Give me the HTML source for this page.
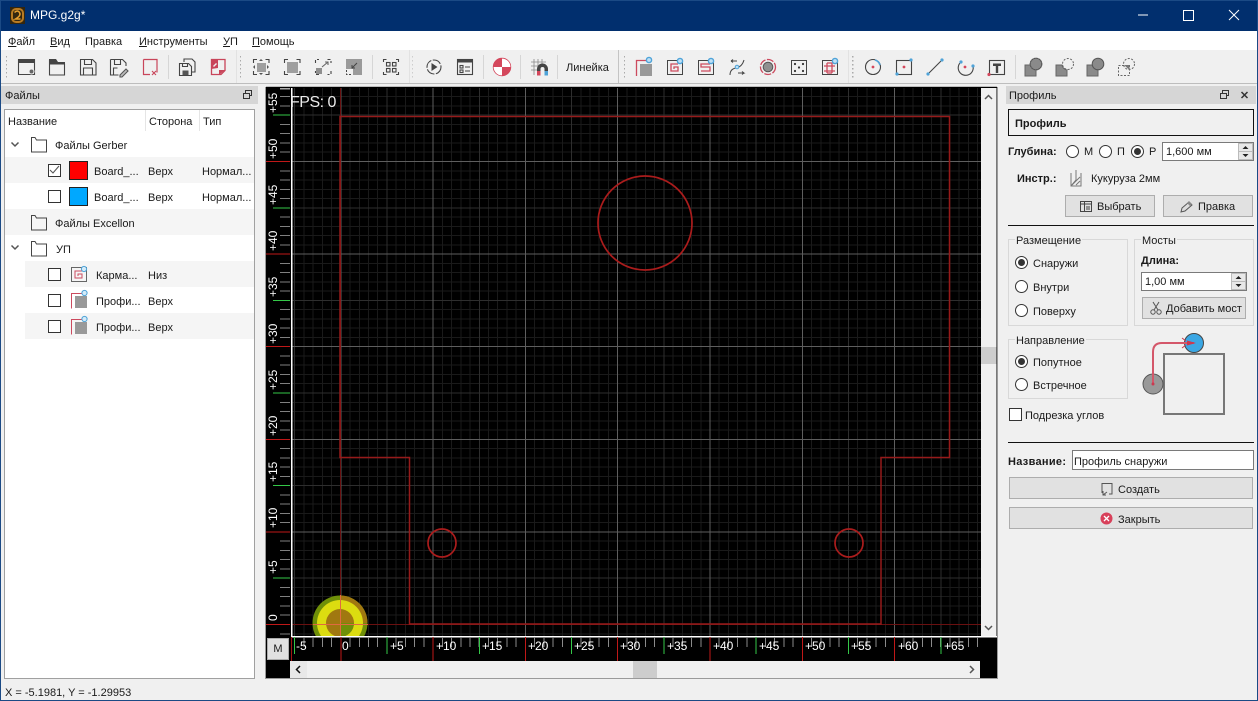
<!DOCTYPE html>
<html><head><meta charset="utf-8"><title>MPG.g2g*</title>
<style>
html,body{margin:0;padding:0;width:1258px;height:701px;overflow:hidden;background:#f0f0f0;font-family:"Liberation Sans","DejaVu Sans",sans-serif;font-size:11px;color:#1a1a1a}
.a{position:absolute}
.t{position:absolute;white-space:nowrap;line-height:16px;height:16px;margin-top:1px}
.b{font-weight:bold}
u{text-decoration:underline}
.btn{position:absolute;background:#e1e1e1;border:1px solid #adadad;box-sizing:border-box}
.inp{position:absolute;background:#fff;border:1px solid #7a7a7a;box-sizing:border-box}
.gb{position:absolute;border:1px solid #d8d8d8;box-sizing:border-box}
.gt{position:absolute;background:#f0f0f0;padding:0 1px;white-space:nowrap;line-height:14px;margin-top:1px}
.hd{position:absolute;background:#d6d6d6;height:18px;top:86px}
.row{position:absolute;height:26px;background:#f5f5f5}
.cb{position:absolute;width:13px;height:13px;background:#fff;border:1px solid #333;box-sizing:border-box}
.rd{position:absolute;width:13px;height:13px;background:#fff;border:1px solid #333;border-radius:50%;box-sizing:border-box}
.rd.on:after{content:"";position:absolute;left:2px;top:2px;width:7px;height:7px;border-radius:50%;background:#333}
svg{position:absolute;left:0;top:0;overflow:hidden}
</style></head><body>

<!-- title bar -->
<div class="a" style="left:0;top:0;width:1258px;height:31px;background:#012f6e"></div>
<div class="a" style="left:0;top:0;width:1258px;height:1px;background:#1b4a85"></div>
<div class="a" style="left:0;top:0;width:1px;height:701px;background:#1b4a85"></div>
<div class="a" style="left:1257px;top:0;width:1px;height:701px;background:#1b4a85"></div>
<div class="a" style="left:0;top:700px;width:1258px;height:1px;background:#1b4a85"></div>
<div class="t" style="left:30px;top:6px;color:#fff;font-size:12px">MPG.g2g*</div>
<svg width="1258" height="31">
 <rect x="10" y="7" width="15" height="17" fill="#33260f"/>
 <rect x="12" y="9" width="11" height="13" rx="4" fill="none" stroke="#b87a22" stroke-width="2"/>
 <path d="M14.500 12.500q3-3 5 0t-4 6.500h5" fill="none" stroke="#e8a030" stroke-width="1.500"/>
 <path d="M1138 15h10" stroke="#fff"/>
 <rect x="1183.500" y="10.500" width="10" height="10" fill="none" stroke="#fff"/>
 <path d="M1229 10l10 10M1239 10l-10 10" stroke="#fff" fill="none"/>
</svg>

<!-- menu -->
<div class="a" style="left:1px;top:31px;width:1256px;height:19px;background:#fff"></div>
<div class="t" style="left:8px;top:33px"><u>Ф</u>айл</div>
<div class="t" style="left:50px;top:33px"><u>В</u>ид</div>
<div class="t" style="left:85px;top:33px">Правка</div>
<div class="t" style="left:139px;top:33px"><u>И</u>нструменты</div>
<div class="t" style="left:223px;top:33px"><u>У</u>П</div>
<div class="t" style="left:252px;top:33px"><u>П</u>омощь</div>

<!-- toolbar -->
<div class="a" style="left:1px;top:50px;width:1256px;height:33px;background:#f0f0f0"></div>
<div class="a" style="left:1px;top:83px;width:1256px;height:1px;background:#bdbdbd"></div>
<div class="t" style="left:566px;top:59px">Линейка</div>
<svg width="1258" height="86" style="top:0">
 <defs>
  <pattern id="grip" width="3" height="4" patternUnits="userSpaceOnUse"><rect width="1.500" height="1.500" fill="#aaa"/></pattern>
  <g id="blueDot"><circle r="2.600" fill="#bfe0f5" stroke="#4fa3d8" stroke-width="1.400"/></g>
 </defs>
 <rect x="5" y="55" width="2" height="24" fill="url(#grip)"/>
 <rect x="236" y="50" width="1" height="33" fill="#e2e2e2"/><rect x="239" y="55" width="2" height="24" fill="url(#grip)"/>
 <rect x="409" y="50" width="1" height="33" fill="#e2e2e2"/><rect x="412" y="55" width="2" height="24" fill="url(#grip)"/>
 <rect x="618" y="50" width="1" height="33" fill="#c4c4c4"/><rect x="623" y="55" width="2" height="24" fill="url(#grip)"/>
 <rect x="848" y="50" width="1" height="33" fill="#e2e2e2"/><rect x="852" y="55" width="2" height="24" fill="url(#grip)"/>
 <g fill="#d6d6d6">
  <rect x="168" y="55" width="1" height="24"/><rect x="372" y="55" width="1" height="24"/><rect x="483" y="55" width="1" height="24"/><rect x="520" y="55" width="1" height="24"/><rect x="557" y="55" width="1" height="24"/><rect x="1015" y="55" width="1" height="24"/>
 </g>
 <g fill="none" stroke="#444" stroke-width="1.100">
  <path d="M18.500 59.500h16v15h-16z"/><rect x="18" y="59" width="17" height="4" fill="#444" stroke="none"/><rect x="29" y="69" width="5" height="5" rx="2.500" fill="#666" stroke="#f0f0f0"/>
  <path d="M49.500 60v15h15v-11h-15"/><path d="M49 59h7l2 3h7v2H49z" fill="#444" stroke="none"/>
  <path d="M80.500 59.500h12l3.500 3.500v12h-15.500z"/><path d="M84.500 59.500v5h7v-5M83.500 75v-7h9v7"/>
  <path d="M110.500 59.500h12l3.500 3.500v3M110.500 59.500v15.500h8M114.500 59.500v5h6v-5M113.500 75v-7h4"/>
  <path d="M120 75l6-6 2 2-6 6h-2z" fill="#bbb" stroke="#555"/>
  <path d="M143.500 59.500h13.500v13M150 74.500h-6.500v-15" stroke="#c8455a" stroke-width="1.200"/>
  <path d="M152 71l4 4M156 71l-4 4" stroke="#c8455a"/>
  <path d="M184 62v-3h8l3 3v10h-3"/><path d="M179.500 63.500h9l3 3v9h-12z" fill="#f0f0f0"/><path d="M182.500 63.500v3h5v-3"/>
  <rect x="182.500" y="70.500" width="6" height="4.500" fill="#555" stroke="none"/>
 </g>
 <path d="M211.500 59.500h13.500v11l-4 4h-9.500z" fill="none" stroke="#c8455a" stroke-width="1.300"/>
 <path d="M211 59h7v9l-7 1z" fill="#c8455a"/><path d="M213 66l3-3 1 1-3 3z" fill="#eee"/><path d="M219 75v-5h6z" fill="#c8455a"/>
 <g fill="none" stroke="#444" stroke-width="1.100">
  <path d="M253.500 63v-3.500h3.500M265.500 59.500h3.500v3.500M269 71v3.500h-3.500M257 74.500h-3.500V71"/>
  <path d="M284.500 63v-3.500h3.500M296.500 59.500h3.500v3.500M300 71v3.500h-3.500M288 74.500h-3.500V71"/>
  <path d="M315.500 63v-3.500h3.500M327.500 59.500h3.500v3.500M331 71v3.500h-3.500M319 74.500h-3.500V71" stroke-dasharray="3 2"/>
  <path d="M322 67l6-5M328 65v-3h-3" stroke="#666"/>
 </g>
 <rect x="257" y="63" width="9" height="9" fill="#9e9e9e"/>
 <path d="M253 67l2-2v4zM269 67l-2-2v4zM261 59l-2 2h4zM261 75l-2-2h4z" fill="#555"/>
 <rect x="287" y="62" width="11" height="11" fill="#9e9e9e"/>
 <rect x="316" y="68" width="6" height="6" fill="#8f8f8f"/>
 <path d="M346 59h16v16h-9v-6h-7z" fill="#9a9a9a"/><path d="M357 63l-5 5M352 65v3h3" stroke="#444" fill="none"/><path d="M346.500 70v4.500h4.500" stroke="#444" fill="none" stroke-dasharray="2 1.500"/>
 <g fill="none" stroke="#444" stroke-width="1.100">
  <path d="M383.500 62v-2.500h3M396 59.500h2.500V62M398.500 72v2.500H396M386.500 74.500h-3V72"/>
  <rect x="386.500" y="62.500" width="3.500" height="3.500"/><rect x="392.500" y="62.500" width="3.500" height="3.500"/><rect x="386.500" y="68.500" width="3.500" height="3.500"/><rect x="392.500" y="68.500" width="3.500" height="3.500"/>
  <circle cx="434" cy="67" r="7" stroke-dasharray="9 1.500"/>
  <rect x="457.500" y="59.500" width="15" height="15"/>
  <rect x="460" y="65.500" width="3" height="2.500"/><rect x="460" y="70" width="3" height="2.500"/><path d="M465 67h5M465 71h5"/>
 </g>
 <path d="M431.500 63l6 4-6 4z" fill="#444"/>
 <rect x="457" y="59" width="16" height="3.500" fill="#444"/>
 <circle cx="502" cy="67" r="9" fill="#d4475c"/>
 <path d="M502 58a9 9 0 0 1 9 9h-9zM502 67v9a9 9 0 0 1-9-9z" fill="#fff"/>
 <circle cx="502" cy="67" r="8.800" fill="none" stroke="#d4475c" stroke-width=".8"/>
 <path d="M531 62h15M531 66h15M531 70h8M534 59v16M538 59v16M542 59v5" stroke="#888" stroke-width=".8"/>
 <path d="M537 75v-6a5.500 5.500 0 0 1 11 0v6h-3.500v-6a2 2 0 0 0-4 0v6z" fill="#444"/>
 <rect x="537" y="71" width="3.500" height="4.500" fill="#d4475c"/><rect x="544.500" y="71" width="3.500" height="4.500" fill="#4fa3d8"/>
 <g fill="none" stroke="#cc4a5e" stroke-width="1.300">
  <path d="M636.500 76V60.500h12"/>
  <rect x="667.500" y="60.500" width="15" height="14" stroke="#444" stroke-width="1"/>
  <path d="M678 64h-7v7h7v-4h-4v2"/>
  <rect x="698.500" y="60.500" width="15" height="14" stroke="#444" stroke-width="1"/>
  <path d="M710 64h-9v3h9v4h-9"/>
  <circle cx="768" cy="67" r="7.500" stroke-dasharray="7 1.500"/>
  <rect x="822.500" y="60.500" width="15" height="14" stroke="#444" stroke-width="1"/>
  <path d="M827 63v10M832 63v10M824 66h11M824 71h11M827 63h5v3M827 73h5"/>
 </g>
 <rect x="640" y="64" width="12" height="12" fill="#999"/>
 <circle cx="768" cy="67" r="4.800" fill="#909090" stroke="#555"/>
 <use href="#blueDot" x="649" y="60"/><use href="#blueDot" x="680" y="61"/><use href="#blueDot" x="711" y="61"/><use href="#blueDot" x="835" y="61"/>
 <g fill="none" stroke="#444" stroke-width="1">
  <path d="M730 75q0-6 6-7t8-8"/><path d="M731 61h6M731 61l2-1.500M731 61l2 1.500M738 73h6l-2-1.500M744 73l-2 1.500"/>
  <rect x="791.500" y="60.500" width="15" height="14"/>
  <circle cx="737" cy="67" r="1.800" fill="#bfe0f5" stroke="#4fa3d8"/>
 </g>
 <g fill="#333"><circle cx="795" cy="64" r="1.100"/><circle cx="803" cy="64" r="1.100"/><circle cx="799" cy="67.500" r="1.100"/><circle cx="795" cy="71" r="1.100"/><circle cx="803" cy="71" r="1.100"/></g>
 <g fill="none" stroke="#444" stroke-width="1.100">
  <circle cx="873" cy="67" r="7.500"/>
  <rect x="896.500" y="60.500" width="15" height="14"/>
  <path d="M928 74l14-14"/>
  <path d="M961 62a7.500 7.500 0 1 0 12 4"/>
  <rect x="989.500" y="60.500" width="15" height="14"/>
 </g>
 <path d="M875 60a7.500 7.500 0 0 1 5 5" stroke="#4fa3d8" stroke-width="1.600" fill="none"/>
 <circle cx="873" cy="67" r="1.400" fill="#d4475c"/><circle cx="904" cy="67" r="1.400" fill="#d4475c"/><circle cx="965" cy="67" r="1.400" fill="#d4475c"/>
 <circle cx="911" cy="60" r="1.600" fill="#4fa3d8"/><circle cx="897" cy="74" r="1.600" fill="#4fa3d8"/><circle cx="928" cy="74" r="1.600" fill="#4fa3d8"/><circle cx="942" cy="60" r="1.600" fill="#4fa3d8"/><circle cx="961" cy="62" r="1.600" fill="#4fa3d8"/><circle cx="973" cy="66" r="1.600" fill="#4fa3d8"/><circle cx="989" cy="74.500" r="1.600" fill="#d4475c"/>
 <path d="M993 63.500h8v2.500h-2.800v7h-2.400v-7H993z" fill="#444"/>
 <rect x="1025" y="65" width="11" height="11" fill="#8a8a8a" stroke="#666"/><circle cx="1036" cy="64" r="5.800" fill="#8a8a8a" stroke="#666"/><circle cx="1036" cy="64" r="5.800" fill="none" stroke="#555" stroke-dasharray="1.500 1"/>
 <path d="M1056 65h6a6 6 0 0 0 5 5v6h-11z" fill="#8a8a8a" stroke="#666"/><circle cx="1068" cy="64" r="5.500" fill="none" stroke="#666" stroke-dasharray="2 1.500"/>
 <rect x="1087" y="65" width="11" height="11" fill="#8a8a8a" stroke="#666"/><circle cx="1098" cy="64" r="5.800" fill="#8a8a8a" stroke="#555"/>
 <rect x="1118.500" y="65.500" width="11" height="10" fill="none" stroke="#666" stroke-dasharray="2 1.500"/><circle cx="1129" cy="64" r="5.500" fill="none" stroke="#666" stroke-dasharray="2 1.500"/><path d="M1124 65h5.500v5z" fill="#777"/>
</svg>

<!-- left dock -->
<div class="hd" style="left:1px;width:257px"></div>
<div class="t" style="left:5px;top:87px">Файлы</div>
<svg width="1258" height="110" style="top:0">
 <path d="M243.500 93.500h6v5h-6zM245.500 93v-2.500h6v5h-2" fill="none" stroke="#333"/>
</svg>
<div class="a" style="left:4px;top:109px;width:251px;height:570px;background:#fff;border:1px solid #a0a0a0;box-sizing:border-box"></div>
<div class="a" style="left:145px;top:110px;width:1px;height:21px;background:#e5e5e5"></div>
<div class="a" style="left:199px;top:110px;width:1px;height:21px;background:#e5e5e5"></div>
<div class="t" style="left:8px;top:113px">Название</div>
<div class="t" style="left:149px;top:113px">Сторона</div>
<div class="t" style="left:203px;top:113px">Тип</div>

<div class="row" style="left:5px;top:157px;width:249px"></div>
<div class="row" style="left:5px;top:209px;width:249px"></div>
<div class="row" style="left:25px;top:261px;width:229px"></div>
<div class="row" style="left:25px;top:313px;width:229px"></div>

<div class="t" style="left:55px;top:137px">Файлы Gerber</div>
<div class="t" style="left:94px;top:163px">Board_...</div><div class="t" style="left:148px;top:163px">Верх</div><div class="t" style="left:202px;top:163px">Нормал...</div>
<div class="t" style="left:94px;top:189px">Board_...</div><div class="t" style="left:148px;top:189px">Верх</div><div class="t" style="left:202px;top:189px">Нормал...</div>
<div class="t" style="left:55px;top:215px">Файлы Excellon</div>
<div class="t" style="left:56px;top:241px">УП</div>
<div class="t" style="left:96px;top:267px">Карма...</div><div class="t" style="left:148px;top:267px">Низ</div>
<div class="t" style="left:96px;top:293px">Профи...</div><div class="t" style="left:148px;top:293px">Верх</div>
<div class="t" style="left:96px;top:319px">Профи...</div><div class="t" style="left:148px;top:319px">Верх</div>

<div class="cb" style="left:48px;top:164px"></div>
<div class="cb" style="left:48px;top:190px"></div>
<div class="cb" style="left:48px;top:268px"></div>
<div class="cb" style="left:48px;top:294px"></div>
<div class="cb" style="left:48px;top:320px"></div>
<div class="a" style="left:69px;top:161px;width:19px;height:19px;background:#f00;border:1px solid #222;box-sizing:border-box"></div>
<div class="a" style="left:69px;top:187px;width:19px;height:19px;background:#00a8ff;border:1px solid #222;box-sizing:border-box"></div>
<svg width="262" height="345" style="top:0">
 <path d="M50 170l3 3 6-7" fill="none" stroke="#555" stroke-width="1.100"/>
 <path d="M11.500 142.500l3.500 3.500 3.500-3.500M11.500 245.500l3.500 3.500 3.500-3.500" fill="none" stroke="#555" stroke-width="1.500"/>
 <g fill="none" stroke="#444">
  <path d="M31.500 137.500v14.500h15v-12h-10l-1.500-2.500z"/>
  <path d="M31.500 215.500v14.500h15v-12h-10l-1.500-2.500z"/>
  <path d="M31.500 241.500v14.500h15v-12h-10l-1.500-2.500z"/>
 </g>
 <rect x="71.500" y="267.500" width="15" height="14" fill="none" stroke="#666"/>
 <path d="M82 271h-7v7h7v-4h-4v2" fill="none" stroke="#cc4a5e"/>
 <circle cx="84" cy="269" r="2.600" fill="#d5ebf8" stroke="#4fa3d8"/>
 <path d="M71.500 308.500v-15h10M71.500 334.500v-15h10" fill="none" stroke="#cc4a5e"/>
 <rect x="75" y="296" width="12" height="12" fill="#999"/><rect x="75" y="322" width="12" height="12" fill="#999"/>
 <circle cx="84.500" cy="293" r="2.600" fill="#d5ebf8" stroke="#4fa3d8"/><circle cx="84.500" cy="319" r="2.600" fill="#d5ebf8" stroke="#4fa3d8"/>
</svg>

<!-- status -->
<div class="t" style="left:5px;top:684px">X = -5.1981, Y = -1.29953</div>

<!-- canvas -->
<svg width="1258" height="701" style="left:0;top:0">
 <defs>
  <clipPath id="cv"><rect x="292" y="88" width="689" height="548"/></clipPath>
 </defs>
 <rect x="266" y="87" width="731" height="592" fill="#000"/>
 <rect x="266" y="86" width="731" height="1" fill="#bdbdbd"/>
 <g clip-path="url(#cv)" shape-rendering="crispEdges" fill="none">
  <path d="M294.150 362H981" stroke="#1a1a1a" stroke-width="548" stroke-dasharray="1 8.230"/>
  <path d="M636 634.260V88" stroke="#1a1a1a" stroke-width="690" stroke-dasharray="1 8.260"/>
  <path d="M294.150 362H981" stroke="#2e2e2e" stroke-width="548" stroke-dasharray="1 45.150"/>
  <path d="M636 625V88" stroke="#2e2e2e" stroke-width="690" stroke-dasharray="1 45.300"/>
  <path d="M340.300 362H981" stroke="#5e5e5e" stroke-width="548" stroke-dasharray="1 91.300"/>
  <path d="M636 625V88" stroke="#5e5e5e" stroke-width="690" stroke-dasharray="1 91.600"/>
 </g>
 <path d="M340.500 88V636M292 624.500H981" stroke="#6a1010" stroke-width="1"/>
 <g clip-path="url(#cv)">
  <circle cx="340" cy="623" r="27.500" fill="#6f8f08"/>
  <path d="M340 623V595.500A27.500 27.500 0 0 1 367.500 623z" fill="#a07810"/>
  <circle cx="340" cy="623" r="23" fill="#dcdc10"/>
  <circle cx="340" cy="623" r="14" fill="#a07810"/>
  <path d="M340 623h14a14 14 0 0 1-14 14z" fill="#6f8f08"/>
  <path d="M340.500 595V636M313 624.500H368" stroke="#e06a40" stroke-width="1"/>
 </g>
 <g fill="none" stroke="#961a1a" stroke-width="1.500">
  <path d="M340 116.500H949.500V457.500H881V624H409.500V457.500H340z"/>
  <g stroke="#aa1c1c" stroke-width="1.700">
   <circle cx="645" cy="223" r="47"/>
   <circle cx="442" cy="543" r="14"/>
   <circle cx="849" cy="543" r="14"/>
  </g>
 </g>
 <!-- left ruler -->
 <g fill="none" shape-rendering="crispEdges">
  <path d="M285 634.260V88" stroke="#808080" stroke-width="10" stroke-dasharray="1 8.260"/>
  <path d="M281.500 578.700V88" stroke="#34c848" stroke-width="17" stroke-dasharray="1 91.600"/>
  <path d="M278 625V88" stroke="#c01818" stroke-width="24" stroke-dasharray="1 91.600"/>
 </g>
 <rect x="291" y="88" width="1.500" height="549" fill="#fff"/>
 <rect x="280" y="88" width="10" height="1.500" fill="#aaa"/>
 <!-- bottom ruler -->
 <rect x="291" y="636" width="706" height="1.500" fill="#fff"/>
 <g fill="none" shape-rendering="crispEdges">
  <path d="M294.150 642H981" stroke="#8a8a8a" stroke-width="10" stroke-dasharray="1 8.230"/>
  <path d="M294.150 645.500H981" stroke="#34c848" stroke-width="17" stroke-dasharray="1 91.300"/>
  <path d="M340.300 649H981" stroke="#c01818" stroke-width="24" stroke-dasharray="1 91.300"/>
 </g>
 <rect x="291" y="637" width="1" height="24" fill="#a01414"/>
 <g fill="#fff" font-family="'Liberation Sans',sans-serif" font-size="12">
  <text transform="translate(277 113) rotate(-90)">+55</text>
  <text transform="translate(277 159) rotate(-90)">+50</text>
  <text transform="translate(277 205) rotate(-90)">+45</text>
  <text transform="translate(277 251) rotate(-90)">+40</text>
  <text transform="translate(277 297) rotate(-90)">+35</text>
  <text transform="translate(277 344) rotate(-90)">+30</text>
  <text transform="translate(277 390) rotate(-90)">+25</text>
  <text transform="translate(277 436) rotate(-90)">+20</text>
  <text transform="translate(277 482) rotate(-90)">+15</text>
  <text transform="translate(277 528) rotate(-90)">+10</text>
  <text transform="translate(277 574) rotate(-90)">+5</text>
  <text transform="translate(277 621) rotate(-90)">0</text>
  <text x="296" y="650">-5</text><text x="342" y="650">0</text><text x="390" y="650">+5</text><text x="436" y="650">+10</text><text x="482" y="650">+15</text><text x="528" y="650">+20</text><text x="574" y="650">+25</text><text x="620" y="650">+30</text><text x="667" y="650">+35</text><text x="713" y="650">+40</text><text x="759" y="650">+45</text><text x="805" y="650">+50</text><text x="851" y="650">+55</text><text x="898" y="650">+60</text><text x="944" y="650">+65</text>
 </g>
 <text x="290" y="107" font-family="'Liberation Sans',sans-serif" font-size="16" letter-spacing="-.5" fill="#ececec">FPS: 0</text>
 <!-- v scrollbar -->
 <rect x="981" y="88" width="15.500" height="548" fill="#f0f0f0"/>
 <rect x="981" y="347" width="15.500" height="17" fill="#cdcdcd"/>
 <path d="M985 99l3.500-3.500 3.500 3.500M985 626l3.500 3.500 3.500-3.500" fill="none" stroke="#555" stroke-width="1.500"/>
 <!-- h scrollbar -->
 <rect x="290" y="661" width="690" height="17" fill="#f0f0f0"/>
 <rect x="290" y="661" width="17" height="17" fill="#e8e8e8"/>
 <rect x="633" y="661" width="24" height="17" fill="#cdcdcd"/>
 <path d="M300 666l-3.500 3.500 3.500 3.500" fill="none" stroke="#111" stroke-width="1.500"/>
 <path d="M970 666l3.500 3.500-3.500 3.500" fill="none" stroke="#555" stroke-width="1.500"/>
 <rect x="266" y="678" width="731" height="1" fill="#9a9a9a"/>
 <rect x="997" y="87" width="1" height="592" fill="#9a9a9a"/>
 <rect x="265" y="87" width="1" height="592" fill="#9a9a9a"/>
</svg>
<div class="a" style="left:267px;top:638px;width:22px;height:22px;background:#e1e1e1;border:1px solid #adadad;box-sizing:border-box;text-align:center;line-height:20px">M</div>

<!-- right dock -->
<div class="hd" style="left:1006px;width:250px"></div>
<div class="t" style="left:1009px;top:87px">Профиль</div>
<svg width="1258" height="110" style="top:0">
 <path d="M1220.500 93.500h6v5h-6zM1222.500 93v-2.500h6v5h-2" fill="none" stroke="#333"/>
 <path d="M1241.500 92l6 6M1247.500 92l-6 6" stroke="#333" stroke-width="1.500" fill="none"/>
</svg>
<div class="a" style="left:1008px;top:109px;width:246px;height:27px;border:1px solid #111;box-sizing:border-box"></div>
<div class="t b" style="left:1015px;top:115px">Профиль</div>
<div class="t b" style="left:1008px;top:143px">Глубина:</div>
<div class="rd" style="left:1066px;top:145px"></div><div class="t" style="left:1084px;top:143px">М</div>
<div class="rd" style="left:1099px;top:145px"></div><div class="t" style="left:1117px;top:143px">П</div>
<div class="rd on" style="left:1131px;top:145px"></div><div class="t" style="left:1149px;top:143px">Р</div>
<div class="inp" style="left:1162px;top:142px;width:92px;height:19px"></div>
<div class="t" style="left:1166px;top:143px">1,600 мм</div>
<div class="t b" style="left:1017px;top:170px">Инстр.:</div>
<div class="t" style="left:1091px;top:170px">Кукуруза 2мм</div>
<div class="btn" style="left:1065px;top:195px;width:90px;height:22px"></div>
<div class="t" style="left:1097px;top:198px">Выбрать</div>
<div class="btn" style="left:1163px;top:195px;width:90px;height:22px"></div>
<div class="t" style="left:1198px;top:198px">Правка</div>
<div class="a" style="left:1008px;top:225px;width:246px;height:1px;background:#111"></div>

<div class="gb" style="left:1008px;top:239px;width:120px;height:87px"></div>
<div class="gt" style="left:1015px;top:233px">Размещение</div>
<div class="gb" style="left:1134px;top:239px;width:120px;height:87px"></div>
<div class="gt" style="left:1141px;top:233px">Мосты</div>
<div class="rd on" style="left:1015px;top:256px"></div><div class="t" style="left:1033px;top:255px">Снаружи</div>
<div class="rd" style="left:1015px;top:280px"></div><div class="t" style="left:1033px;top:279px">Внутри</div>
<div class="rd" style="left:1015px;top:304px"></div><div class="t" style="left:1033px;top:303px">Поверху</div>
<div class="t b" style="left:1141px;top:252px">Длина:</div>
<div class="inp" style="left:1141px;top:272px;width:106px;height:19px"></div>
<div class="t" style="left:1145px;top:273px">1,00 мм</div>
<div class="btn" style="left:1142px;top:297px;width:104px;height:22px"></div>
<div class="t" style="left:1166px;top:300px">Добавить мост</div>

<div class="gb" style="left:1008px;top:339px;width:120px;height:60px"></div>
<div class="gt" style="left:1015px;top:333px">Направление</div>
<div class="rd on" style="left:1015px;top:355px"></div><div class="t" style="left:1033px;top:354px">Попутное</div>
<div class="rd" style="left:1015px;top:378px"></div><div class="t" style="left:1033px;top:377px">Встречное</div>
<div class="cb" style="left:1009px;top:408px"></div>
<div class="t" style="left:1025px;top:407px">Подрезка углов</div>
<div class="a" style="left:1008px;top:442px;width:246px;height:1px;background:#111"></div>
<div class="t b" style="left:1008px;top:453px;letter-spacing:.3px">Название:</div>
<div class="inp" style="left:1072px;top:450px;width:182px;height:20px"></div>
<div class="t" style="left:1074px;top:453px">Профиль снаружи</div>
<div class="btn" style="left:1009px;top:477px;width:244px;height:22px"></div>
<div class="t" style="left:1118px;top:481px">Создать</div>
<div class="btn" style="left:1009px;top:507px;width:244px;height:22px"></div>
<div class="t" style="left:1118px;top:511px">Закрыть</div>

<svg width="1258" height="540" style="top:0">
 <g fill="#e8e8e8" stroke="#bbb"><rect x="1238.500" y="143.500" width="14" height="16"/><rect x="1231.500" y="273.500" width="14" height="16"/></g>
 <path d="M1245.500 146l-3 3h6zM1245.500 157l-3-3h6zM1238.500 276l-3 3h6zM1238.500 287l-3-3h6z" fill="#222"/>
 <path d="M1238 151.500h15M1231 281.500h15" stroke="#bbb"/>
 <path d="M1076 170v10l-5 6M1071 173v13h10V173M1072 185l8-8M1076 185l4-4" fill="none" stroke="#777"/>
 <rect x="1080.500" y="201.500" width="11" height="10" fill="none" stroke="#444"/>
 <path d="M1081 204h10M1084.500 202v9M1086 207h4M1086 209h4" stroke="#444" fill="none"/>
 <path d="M1181 212l1-4 7-6 3 3-7 6z" fill="#ddd" stroke="#555"/><path d="M1187 203l3 3 2-2-3-3z" fill="#888"/>
 <g fill="none" stroke="#555"><circle cx="1153" cy="312" r="2.200"/><circle cx="1159" cy="312" r="2.200"/><path d="M1154 310l5-8M1158 310l-5-8"/></g>
 <path d="M1102 493v-9.500h10v10.500h-3M1103 491v4h3M1103 495l4-3" fill="none" stroke="#555"/>
 <circle cx="1106.500" cy="518.500" r="6" fill="#d8405a"/><path d="M1104 516l5 5M1109 516l-5 5" stroke="#fff" stroke-width="1.300"/>
 <rect x="1164" y="354" width="60" height="60" fill="none" stroke="#777" stroke-width="2"/>
 <circle cx="1153" cy="384" r="10" fill="#999" stroke="#555"/>
 <circle cx="1194" cy="343" r="9.500" fill="#3ba7e4" stroke="#444"/>
 <path d="M1153 384V352q0-9 9-9h32" fill="none" stroke="#d4576a" stroke-width="2"/>
 <circle cx="1153" cy="384" r="1.500" fill="#c83a50"/>
 <path d="M1196 343l-9-2.500v5z" fill="#c83a50"/>
 <path d="M1182 338l4 3M1182 348l4-3" stroke="#c83a50" fill="none"/>
</svg>
</body></html>
